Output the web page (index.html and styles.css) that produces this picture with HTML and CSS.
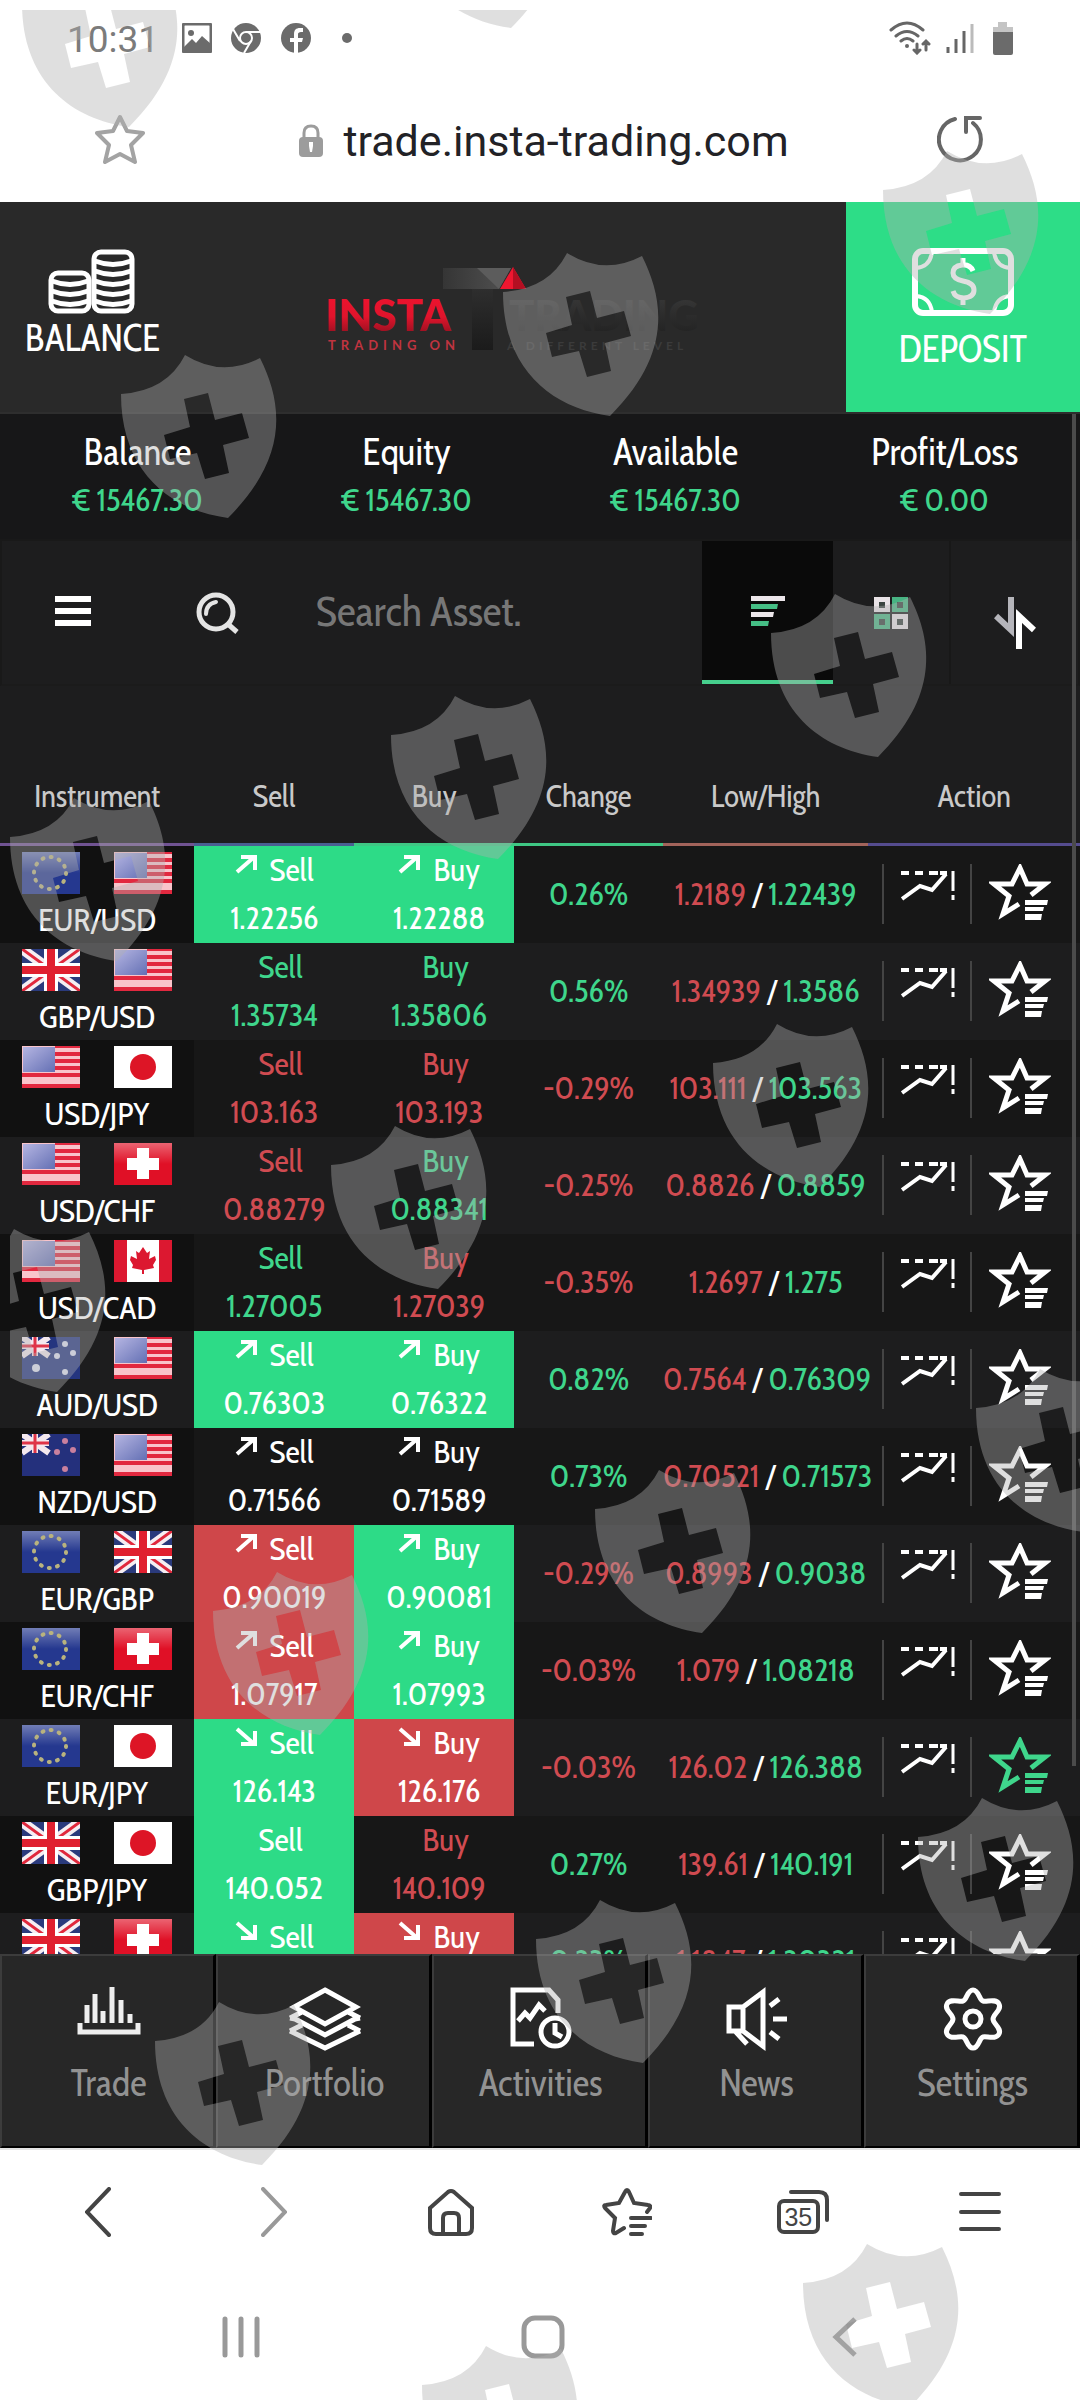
FILE: index.html
```html
<!DOCTYPE html>
<html lang="en">
<head>
<meta charset="utf-8">
<meta name="viewport" content="width=device-width, initial-scale=1">
<title>Insta Trading</title>
<link rel="stylesheet" href="styles.css">
</head>
<body>
<svg class="sprite" aria-hidden="true">
  <defs>
    <linearGradient id="sheen" x1="0" y1="0" x2="0" y2="1"><stop offset="0" stop-color="#fff" stop-opacity=".35"/><stop offset=".5" stop-color="#fff" stop-opacity="0"/></linearGradient>
    <linearGradient id="canton" x1="0" y1="0" x2="1" y2="1"><stop offset="0" stop-color="#b5b5e2"/><stop offset="1" stop-color="#6470b4"/></linearGradient>
    <linearGradient id="red" x1="0" y1="0" x2="0" y2="1"><stop offset="0" stop-color="#f3122f"/><stop offset=".55" stop-color="#e0142c"/><stop offset="1" stop-color="#7d0f1c"/></linearGradient>
    <linearGradient id="bar" x1="0" y1="0" x2="1" y2="0"><stop offset="0" stop-color="#353535"/><stop offset="1" stop-color="#525252"/></linearGradient>
    <linearGradient id="stem" x1="0" y1="0" x2="0" y2="1"><stop offset="0" stop-color="#2e2e2e"/><stop offset="1" stop-color="#1b1b1b"/></linearGradient>
    <linearGradient id="dark" x1="0" y1="0" x2="0" y2="1"><stop offset="0" stop-color="#3a3a3a"/><stop offset="1" stop-color="#1f1f1f"/></linearGradient>
  </defs>
  <symbol id="us" viewBox="0 0 58 42"><path fill="#f9c4cb" d="M0 0h58v42H0z"/><path fill="#e2283f" d="M33 0h25v2H33zM33 6h25v4H33zM33 13h25v4H33zM33 20h25v4H33zM0 27h58v4H0zM0 38h58v4H0z"/><path fill="url(#canton)" d="M1 1h32v25H1z"/></symbol>
  <symbol id="eu" viewBox="0 0 58 42"><path fill="#25388f" d="M0 0h58v42H0z"/><path fill="url(#sheen)" d="M0 0h58v42H0z"/><circle cx="28" cy="21" r="16" fill="none" stroke="#b9b37e" stroke-width="4" stroke-linecap="round" stroke-dasharray="1 7.4"/></symbol>
  <symbol id="gb" viewBox="0 0 58 42"><path fill="#2a3a7c" d="M0 0h58v42H0z"/><path stroke="#f5eef2" stroke-width="10" d="M0 0l58 42M58 0L0 42"/><path stroke="#e0283c" stroke-width="3" d="M0 0l58 42M58 0L0 42"/><path stroke="#fff" stroke-width="14" d="M29 0v42M0 21h58"/><path stroke="#e0202f" stroke-width="8" d="M29 0v42M0 21h58"/></symbol>
  <symbol id="jp" viewBox="0 0 58 42"><path fill="#fff" d="M0 0h58v42H0z"/><circle cx="29" cy="21" r="13" fill="#dd1526"/></symbol>
  <symbol id="ch" viewBox="0 0 58 42"><path fill="#e01026" d="M0 0h58v42H0z"/><path fill="url(#sheen)" d="M0 0h58v42H0z"/><path fill="#fff" d="M23 5h12v10h10v12H35v9H23v-9H13V15h10z"/></symbol>
  <symbol id="ca" viewBox="0 0 58 42"><path fill="#fff" d="M0 0h58v42H0z"/><path fill="#dc1830" d="M0 0h13v42H0zM45 0h13v42H45z"/><path fill="#dc1830" d="M29 7l4 6 3-2-1 8 6-3 1 4-3 5 1 3-10 2v4h-2v-4l-10-2 1-3-3-5 1-4 6 3-1-8 3 2z"/></symbol>
  <symbol id="au" viewBox="0 0 58 42"><path fill="#24357f" d="M0 0h58v42H0z"/><path stroke="#f4e8ee" stroke-width="6" d="M0 0l27 19M27 0L0 19M13 0v19M0 9h27"/><path stroke="#df3448" stroke-width="3" d="M13 0v19M0 9h27"/><g fill="#dfe3f4"><circle cx="14" cy="31" r="4"/><circle cx="43" cy="7" r="3"/><circle cx="35" cy="19" r="3"/><circle cx="51" cy="16" r="3"/><circle cx="43" cy="35" r="3"/></g></symbol>
  <symbol id="nz" viewBox="0 0 58 42"><path fill="#24307c" d="M0 0h58v42H0z"/><path stroke="#f4e8ee" stroke-width="6" d="M0 0l27 19M27 0L0 19M13 0v19M0 9h27"/><path stroke="#df3448" stroke-width="3" d="M13 0v19M0 9h27"/><g fill="#c9809e"><circle cx="43" cy="7" r="3"/><circle cx="35" cy="18" r="3"/><circle cx="51" cy="16" r="3"/><circle cx="43" cy="35" r="3"/></g></symbol>
  <symbol id="up" viewBox="0 0 22 20"><path fill="none" stroke="currentColor" stroke-width="4" d="M2 18L18 4M6 3h14v13"/></symbol>
  <symbol id="down" viewBox="0 0 22 20"><path fill="none" stroke="currentColor" stroke-width="4" d="M2 2l16 14M20 4v13H6"/></symbol>
  <symbol id="chart" viewBox="0 0 54 32"><path fill="none" stroke="currentColor" stroke-width="4" d="M0 3h8M14 3h8M28 3h9M39 3h7"/><path fill="none" stroke="currentColor" stroke-width="4" d="M1 29l18-13 12 4L45 4"/><path stroke="currentColor" stroke-width="3" d="M52 1v20M52 25v5"/></symbol>
  <symbol id="fav" viewBox="0 2 62 56"><path fill="none" stroke="currentColor" stroke-width="5" d="M42 33l14-11H38L31 6l-8 16H5l15 12-6 18 16-10"/><path fill="currentColor" d="M36 38h23l-1 5H36zM36 45h19l-1 4H36zM36 52h17l-1 6H36z"/></symbol>
</svg>

<div class="page">
  <div class="status">
    <span class="clock">10:31</span>
    <svg width="30" height="30" viewBox="0 0 30 30"><rect x="1" y="1" width="28" height="28" rx="2" fill="none" stroke="#6b6b6b" stroke-width="3"/><circle cx="9" cy="10" r="3" fill="#6b6b6b"/><path fill="#6b6b6b" d="M2 24l8-8 4 4 6-7 9 8v7H2z"/></svg>
    <svg width="32" height="32" viewBox="0 0 32 32"><circle cx="16" cy="16" r="15" fill="#6b6b6b"/><circle cx="16" cy="16" r="6" fill="#6b6b6b" stroke="#fff" stroke-width="2"/><path stroke="#fff" stroke-width="2" d="M16 10h14M10 19L3 7M21 19l-7 12"/></svg>
    <svg width="32" height="32" viewBox="0 0 32 32"><circle cx="16" cy="16" r="15" fill="#6b6b6b"/><path fill="#fff" d="M14 32V20h-4v-4h4v-4c0-4 2-6 6-6h3v4h-2c-2 0-3 1-3 2v4h5l-1 4h-4v12z"/></svg>
    <svg class="more" width="10" height="10" viewBox="0 0 10 10"><circle cx="5" cy="5" r="5" fill="#6b6b6b"/></svg>
    <span class="grow"></span>
    <svg width="42" height="34" viewBox="0 0 42 34"><g fill="none" stroke="#666" stroke-width="3" stroke-linecap="round"><path d="M2 9q16-14 32 0M7 15q11-9 22 0M12 20q6-5 12 0"/><path d="M28 23v8M25 29l3 3 3-3M37 29v-8M34 23l3-3 3 3"/></g><circle cx="18" cy="25" r="2" fill="#666"/></svg>
    <svg width="28" height="32" viewBox="0 0 28 32"><path stroke="#666" stroke-width="3" d="M2 25v6M10 17v14M18 9v22"/><path stroke="#bbb" stroke-width="3" d="M26 2v29"/></svg>
    <svg width="22" height="34" viewBox="0 0 22 34"><path fill="#c4c4c4" d="M6 1h9v5h6v6H1V6h5z"/><path fill="#6b6b6b" d="M1 11h20v21q0 2-2 2H3q-2 0-2-2z"/></svg>
  </div>

  <div class="address">
    <button class="plain" aria-label="Bookmark"><svg width="50" height="50" viewBox="0 0 50 50"><path fill="none" stroke="#a3a3a3" stroke-width="4" stroke-linejoin="round" d="M25 3l7 14 16 2-12 12 4 17-15-8-15 8 4-17L2 19l16-2z"/></svg></button>
    <a class="url" href="#"><svg width="24" height="34" viewBox="0 0 24 34"><path fill="none" stroke="#9c9c9c" stroke-width="3" d="M5 15V9q0-7 7-7t7 7v6"/><rect y="13" width="24" height="20" rx="4" fill="#9c9c9c"/><path fill="#fff" d="M10 18h4v4l-1 6h-2l-1-6z"/></svg><span>trade.insta-trading.com</span></a>
    <button class="plain" aria-label="Reload"><svg width="46" height="48" viewBox="0 0 46 48"><path fill="none" stroke="#666" stroke-width="4" stroke-linecap="round" d="M18 4a21 21 0 1 0 18 4M29 17V3h14"/></svg></button>
  </div>

  <main class="app">
    <header class="top">
      <button class="balance"><svg width="88" height="66" viewBox="0 0 88 66"><g fill="none" stroke="#fff" stroke-width="5"><rect x="3" y="25" width="38" height="38" rx="7"/><rect x="46" y="4" width="38" height="59" rx="7"/><path d="M4 33q18 7 36 0M4 43q18 7 36 0M4 53q18 7 36 0M47 13q18 7 36 0M47 23q18 7 36 0M47 33q18 7 36 0M47 43q18 7 36 0M47 53q18 7 36 0"/></g></svg><span>BALANCE</span></button>
      <a class="logo" href="#" aria-label="Insta Trading">
        <svg width="380" height="90" viewBox="0 0 380 90">
          <path fill="url(#stem)" d="M147 22h21v62h-21z"/><path fill="url(#bar)" d="M118 2h68l-12 21h-56z"/><path fill="#5c5c5c" d="M152 2h34l-12 21z"/><path fill="#ee1730" d="M188 1l13 22h-26z"/><path fill="#b30f22" d="M188 1l13 22h-13z"/>
          <g font-family="Lato, sans-serif"><text class="word big" x="0" y="65" fill="url(#red)">INSTA</text><text class="word" x="184" y="65" fill="url(#dark)">TRADING</text>
          <text class="tag" x="3" y="84" fill="#c03440">TRADING ON</text><text class="tag fine" x="182" y="84" fill="#3b3b3b">A DIFFERENT LEVEL</text></g>
        </svg>
      </a>
      <button class="deposit"><svg width="102" height="68" viewBox="0 0 102 68"><g fill="none" stroke="#fff" stroke-width="6"><rect x="3" y="3" width="96" height="62" rx="8"/><path stroke-width="4" d="M20 4q-2 15-16 16M82 4q2 15 16 16M4 48q14 1 16 16M98 48q-14 1-16 16"/><path stroke-width="5" d="M61 23q-3-7-11-6-9 1-9 8 0 6 10 8 11 2 11 9 0 7-10 8-9 0-11-7M51 10v8M51 49v8"/></g></svg><span>DEPOSIT</span></button>
    </header>

    <dl class="stats">
      <div><dt>Balance</dt><dd>€ 15467.30</dd></div>
      <div><dt>Equity</dt><dd>€ 15467.30</dd></div>
      <div><dt>Available</dt><dd>€ 15467.30</dd></div>
      <div><dt>Profit/Loss</dt><dd>€ 0.00</dd></div>
    </dl>

    <div class="tools">
      <button class="plain burger" aria-label="Menu"><svg width="38" height="32" viewBox="0 0 38 32"><path stroke="#fff" stroke-width="6" d="M1 4h36M1 16h36M1 28h36"/></svg></button>
      <label class="search"><svg width="44" height="42" viewBox="0 0 44 42"><g fill="none" stroke="#e4e4e4" stroke-width="5"><circle cx="21" cy="20" r="17"/><path d="M34 33l8 7"/><path stroke-width="4" d="M11 22q0-10 10-12" stroke-linecap="round"/></g></svg><input type="search" placeholder="Search Asset." aria-label="Search Asset"></label>
      <button class="tool active" aria-label="List view"><svg width="34" height="32" viewBox="0 0 34 32"><path fill="#ece6ea" d="M0 1h34v5H0zM0 17h23l-1 5H0z"/><path fill="#45be85" d="M0 9h27l-1 5H0zM0 26h18l-1 5H0z"/></svg></button>
      <button class="tool grid" aria-label="Grid view"><svg width="34" height="32" viewBox="0 0 34 32"><path fill="#e8e2e6" d="M0 0h16v15H0zM18 17h16v15H18z"/><path fill="#48b483" d="M18 0h16v15H18zM0 17h16v15H0z"/><path fill="#3a4440" d="M5 5h6v6H5zM23 5h6v6h-6zM5 22h6v6H5zM23 22h6v6h-6z"/></svg></button>
      <button class="tool sort" aria-label="Sort"><svg width="42" height="54" viewBox="0 0 42 54"><g fill="none" stroke-width="6"><path stroke="#b5b5bb" d="M17 1v33L2 20"/><path stroke="#fff" d="M25 53V20l15 14"/></g></svg></button>
    </div>

    <div class="list">
      <table>
        <colgroup><col class="c1"><col class="c2"><col class="c2"><col class="c3"><col class="c4"><col class="c5"></colgroup>
        <thead><tr><th class="violet">Instrument</th><th class="blue">Sell</th><th class="green">Buy</th><th class="green">Change</th><th class="rust">Low/High</th><th class="indigo">Action</th></tr></thead>
        <tbody>
          <tr><td class="pair"><div><svg><use href="#eu"/></svg><svg><use href="#us"/></svg></div>EUR/USD</td>
            <td><button class="quote fill-up"><span><svg><use href="#up"/></svg>Sell</span>1.22256</button></td><td><button class="quote fill-up buy"><span><svg><use href="#up"/></svg>Buy</span>1.22288</button></td>
            <td class="gain">0.26%</td><td><span class="loss">1.2189</span> / <span class="gain">1.22439</span></td>
            <td><div class="acts"><button aria-label="Chart EUR/USD"><svg class="ch"><use href="#chart"/></svg></button><button aria-label="Favourite EUR/USD"><svg class="fv"><use href="#fav"/></svg></button></div></td></tr>
          <tr><td class="pair"><div><svg><use href="#gb"/></svg><svg><use href="#us"/></svg></div>GBP/USD</td>
            <td><button class="quote gain"><span>Sell</span>1.35734</button></td><td><button class="quote gain buy"><span>Buy</span>1.35806</button></td>
            <td class="gain">0.56%</td><td><span class="loss">1.34939</span> / <span class="gain">1.3586</span></td>
            <td><div class="acts"><button aria-label="Chart GBP/USD"><svg class="ch"><use href="#chart"/></svg></button><button aria-label="Favourite GBP/USD"><svg class="fv"><use href="#fav"/></svg></button></div></td></tr>
          <tr><td class="pair"><div><svg><use href="#us"/></svg><svg><use href="#jp"/></svg></div>USD/JPY</td>
            <td><button class="quote loss"><span>Sell</span>103.163</button></td><td><button class="quote loss buy"><span>Buy</span>103.193</button></td>
            <td class="loss">-0.29%</td><td><span class="loss">103.111</span> / <span class="gain">103.563</span></td>
            <td><div class="acts"><button aria-label="Chart USD/JPY"><svg class="ch"><use href="#chart"/></svg></button><button aria-label="Favourite USD/JPY"><svg class="fv"><use href="#fav"/></svg></button></div></td></tr>
          <tr><td class="pair"><div><svg><use href="#us"/></svg><svg><use href="#ch"/></svg></div>USD/CHF</td>
            <td><button class="quote loss"><span>Sell</span>0.88279</button></td><td><button class="quote gain buy"><span>Buy</span>0.88341</button></td>
            <td class="loss">-0.25%</td><td><span class="loss">0.8826</span> / <span class="gain">0.8859</span></td>
            <td><div class="acts"><button aria-label="Chart USD/CHF"><svg class="ch"><use href="#chart"/></svg></button><button aria-label="Favourite USD/CHF"><svg class="fv"><use href="#fav"/></svg></button></div></td></tr>
          <tr><td class="pair"><div><svg><use href="#us"/></svg><svg><use href="#ca"/></svg></div>USD/CAD</td>
            <td><button class="quote gain"><span>Sell</span>1.27005</button></td><td><button class="quote loss buy"><span>Buy</span>1.27039</button></td>
            <td class="loss">-0.35%</td><td><span class="loss">1.2697</span> / <span class="gain">1.275</span></td>
            <td><div class="acts"><button aria-label="Chart USD/CAD"><svg class="ch"><use href="#chart"/></svg></button><button aria-label="Favourite USD/CAD"><svg class="fv"><use href="#fav"/></svg></button></div></td></tr>
          <tr><td class="pair"><div><svg><use href="#au"/></svg><svg><use href="#us"/></svg></div>AUD/USD</td>
            <td><button class="quote fill-up"><span><svg><use href="#up"/></svg>Sell</span>0.76303</button></td><td><button class="quote fill-up buy"><span><svg><use href="#up"/></svg>Buy</span>0.76322</button></td>
            <td class="gain">0.82%</td><td><span class="loss">0.7564</span> / <span class="gain">0.76309</span></td>
            <td><div class="acts"><button aria-label="Chart AUD/USD"><svg class="ch"><use href="#chart"/></svg></button><button aria-label="Favourite AUD/USD"><svg class="fv"><use href="#fav"/></svg></button></div></td></tr>
          <tr><td class="pair"><div><svg><use href="#nz"/></svg><svg><use href="#us"/></svg></div>NZD/USD</td>
            <td><button class="quote"><span><svg><use href="#up"/></svg>Sell</span>0.71566</button></td><td><button class="quote buy"><span><svg><use href="#up"/></svg>Buy</span>0.71589</button></td>
            <td class="gain">0.73%</td><td><span class="loss">0.70521</span> / <span class="gain">0.71573</span></td>
            <td><div class="acts"><button aria-label="Chart NZD/USD"><svg class="ch"><use href="#chart"/></svg></button><button aria-label="Favourite NZD/USD"><svg class="fv"><use href="#fav"/></svg></button></div></td></tr>
          <tr><td class="pair"><div><svg><use href="#eu"/></svg><svg><use href="#gb"/></svg></div>EUR/GBP</td>
            <td><button class="quote fill-down"><span><svg><use href="#up"/></svg>Sell</span>0.90019</button></td><td><button class="quote fill-up buy"><span><svg><use href="#up"/></svg>Buy</span>0.90081</button></td>
            <td class="loss">-0.29%</td><td><span class="loss">0.8993</span> / <span class="gain">0.9038</span></td>
            <td><div class="acts"><button aria-label="Chart EUR/GBP"><svg class="ch"><use href="#chart"/></svg></button><button aria-label="Favourite EUR/GBP"><svg class="fv"><use href="#fav"/></svg></button></div></td></tr>
          <tr><td class="pair"><div><svg><use href="#eu"/></svg><svg><use href="#ch"/></svg></div>EUR/CHF</td>
            <td><button class="quote fill-down"><span><svg><use href="#up"/></svg>Sell</span>1.07917</button></td><td><button class="quote fill-up buy"><span><svg><use href="#up"/></svg>Buy</span>1.07993</button></td>
            <td class="loss">-0.03%</td><td><span class="loss">1.079</span> / <span class="gain">1.08218</span></td>
            <td><div class="acts"><button aria-label="Chart EUR/CHF"><svg class="ch"><use href="#chart"/></svg></button><button aria-label="Favourite EUR/CHF"><svg class="fv"><use href="#fav"/></svg></button></div></td></tr>
          <tr><td class="pair"><div><svg><use href="#eu"/></svg><svg><use href="#jp"/></svg></div>EUR/JPY</td>
            <td><button class="quote fill-up"><span><svg><use href="#down"/></svg>Sell</span>126.143</button></td><td><button class="quote fill-down buy"><span><svg><use href="#down"/></svg>Buy</span>126.176</button></td>
            <td class="loss">-0.03%</td><td><span class="loss">126.02</span> / <span class="gain">126.388</span></td>
            <td><div class="acts"><button aria-label="Chart EUR/JPY"><svg class="ch"><use href="#chart"/></svg></button><button class="gain" aria-label="Favourite EUR/JPY"><svg class="fv"><use href="#fav"/></svg></button></div></td></tr>
          <tr><td class="pair"><div><svg><use href="#gb"/></svg><svg><use href="#jp"/></svg></div>GBP/JPY</td>
            <td><button class="quote fill-up"><span>Sell</span>140.052</button></td><td><button class="quote loss buy"><span>Buy</span>140.109</button></td>
            <td class="gain">0.27%</td><td><span class="loss">139.61</span> / <span class="gain">140.191</span></td>
            <td><div class="acts"><button aria-label="Chart GBP/JPY"><svg class="ch"><use href="#chart"/></svg></button><button aria-label="Favourite GBP/JPY"><svg class="fv"><use href="#fav"/></svg></button></div></td></tr>
          <tr><td class="pair"><div><svg><use href="#gb"/></svg><svg><use href="#ch"/></svg></div></td>
            <td><button class="quote fill-up"><span><svg><use href="#down"/></svg>Sell</span></button></td><td><button class="quote fill-down buy"><span><svg><use href="#down"/></svg>Buy</span></button></td>
            <td class="gain">0.23%</td><td><span class="loss">1.1847</span> / <span class="gain">1.20321</span></td>
            <td><div class="acts"><button aria-label="Chart GBP/CHF"><svg class="ch"><use href="#chart"/></svg></button><button aria-label="Favourite GBP/CHF"><svg class="fv"><use href="#fav"/></svg></button></div></td></tr>
        </tbody>
      </table>
    </div>

    <nav class="tabs">
      <a href="#"><svg width="64" height="64" viewBox="0 0 64 64"><path fill="none" stroke="#eee" stroke-width="5" d="M3 36v9h58v-9M10 36V18M18 36V7M26 36V24M35 36V0M44 36V13M53 36V27"/></svg>Trade</a>
      <a href="#"><svg width="72" height="64" viewBox="0 0 72 64"><path fill="none" stroke="#fff" stroke-width="5" d="M36 3l31 17-31 17L5 20zM1 31l5 1 30 16 30-16 5-1M1 44l35 17 35-17M1 31l12-6M71 31l-12-6M1 44l12-6M71 44l-12-6"/></svg>Portfolio</a>
      <a href="#"><svg width="62" height="64" viewBox="0 0 62 64"><g fill="none" stroke="#fff" stroke-width="5"><path d="M24 57H3V3h36l9 10v13M8 34l7-8 5 5 9-13 6 6"/><circle cx="45" cy="45" r="14"/><path d="M45 36v10l7 4"/></g></svg>Activities</a>
      <a href="#"><svg width="62" height="64" viewBox="0 0 62 64"><path fill="none" stroke="#fff" stroke-width="5" d="M3 20h14v24H3zM17 20L37 5v54L17 44M9 44l12 13M44 19l9-7M47 32h14M44 45l9 7"/></svg>News</a>
      <a href="#"><svg width="62" height="64" viewBox="0 0 62 64"><path fill="none" stroke="#fff" stroke-width="5" stroke-linejoin="round" d="M31 3c6 0 6 10 10 11s13-3 16 3-6 10-6 15 9 9 6 15-12 2-16 3-4 11-10 11-6-10-10-11-13 3-16-3 6-10 6-15-9-9-6-15 12-2 16-3 4-11 10-11z"/><circle cx="31" cy="32" r="8" fill="none" stroke="#fff" stroke-width="5"/></svg>Settings</a>
    </nav>
    <span class="scrollbar"></span>
  </main>

  <nav class="browser">
    <button class="plain" aria-label="Back"><svg width="26" height="50" viewBox="0 0 26 50"><path d="M24 2L2 25l22 23"/></svg></button>
    <button class="plain dim" aria-label="Forward"><svg width="26" height="50" viewBox="0 0 26 50"><path d="M2 2l22 23L2 48"/></svg></button>
    <button class="plain" aria-label="Home"><svg width="46" height="48" viewBox="0 0 46 48"><path d="M2 20L20 4q3-2 6 0l18 16v20q0 6-6 6H8q-6 0-6-6zM15 46V30q0-5 5-5h6q5 0 5 5v16"/></svg></button>
    <button class="plain" aria-label="Bookmarks"><svg width="50" height="50" viewBox="0 0 50 50"><path d="M45 25l3-4q1-3-2-3l-14-2-5-11q-2-4-4 0l-6 11-13 2q-3 0-1 3l10 10-2 13q0 3 3 2l8-5M29 31h20M29 39h14M29 47h11"/></svg></button>
    <button class="plain count" aria-label="35 open tabs"><svg width="52" height="48" viewBox="0 0 52 48"><rect x="2" y="13" width="39" height="31" rx="5"/><path d="M14 4h28q8 0 8 8v20"/></svg><span>35</span></button>
    <button class="plain" aria-label="Browser menu"><svg width="42" height="42" viewBox="0 0 42 42"><path d="M2 3h38M2 21h38M2 38h38"/></svg></button>
  </nav>

  <nav class="system">
    <button class="plain" aria-label="Recent apps"><svg width="38" height="42" viewBox="0 0 38 42"><path stroke-linecap="round" d="M3 3v36M19 3v36M35 3v36"/></svg></button>
    <button class="plain" aria-label="Home screen"><svg width="44" height="44" viewBox="0 0 44 44"><rect x="3" y="3" width="38" height="38" rx="11"/></svg></button>
    <button class="plain" aria-label="Go back"><svg width="26" height="42" viewBox="0 0 26 42"><path d="M23 3L4 21l19 18"/></svg></button>
  </nav>

  <svg class="shields" aria-hidden="true">
    <defs><path id="mark" fill-rule="evenodd" d="M-64 39Q-18 36 0 0Q37 23 75 3C98 49 104 102 43 163C-15 155-64 117-64 39ZM-1 44L23 38 30 65 57 58 64 83 38 90 44 118 20 124 12 98-15 104-21 80 5 72Z"/></defs>
    <g fill="#afafaf" fill-opacity=".4">
      <use href="#mark" x="76" y="-46"/><use href="#mark" x="458" y="-145"/><use href="#mark" x="175" y="345"/><use href="#mark" x="557" y="243"/><use href="#mark" x="937" y="141"/>
      <use href="#mark" x="64" y="788"/><use href="#mark" x="445" y="686"/><use href="#mark" x="825" y="584"/><use href="#mark" x="4" y="1219"/><use href="#mark" x="385" y="1116"/><use href="#mark" x="767" y="1014"/>
      <use href="#mark" x="267" y="1562"/><use href="#mark" x="649" y="1460"/><use href="#mark" x="1030" y="1359"/><use href="#mark" x="209" y="1992"/><use href="#mark" x="590" y="1890"/><use href="#mark" x="972" y="1788"/>
      <use href="#mark" x="476" y="2336"/><use href="#mark" x="857" y="2234"/>
    </g>
  </svg>
</div>
</body>
</html>
```
FILE: styles.css
```css
* { box-sizing: border-box; }
body { margin: 0; background: #fff; }
button, a { font: inherit; color: inherit; text-decoration: none; }
button { margin: 0; padding: 0; border: 0; background: none; }
svg { display: block; flex: none; }
.sprite { position: absolute; width: 0; height: 0; }

.page {
  position: relative;
  display: flex;
  flex-direction: column;
  height: 100vh;
  overflow: hidden;
  font-family: "Cabin Condensed", "Liberation Sans Narrow", "Roboto Condensed", "Liberation Sans", sans-serif;
  font-size: 32px;
  line-height: 36px;
  color: #fff;
}
.grow { flex: 1; }

/* phone status bar and address bar */
.status { display: flex; align-items: center; gap: 18px; height: 76px; padding: 0 66px 0 67px; color: #7b7b7b; font-family: Roboto, sans-serif; }
.clock { font-size: 37px; width: 97px; padding-top: 3px; }
.status .more { margin-left: 12px; }
.status svg:nth-last-child(2) { margin-left: -3px; }
.address { display: flex; align-items: center; justify-content: space-between; height: 126px; padding: 2px 97px 0 95px; color: #222226; font-family: Roboto, sans-serif; font-size: 43px; line-height: 50px; }
.address .plain { padding-bottom: 2px; }
.url { display: flex; align-items: center; gap: 20px; padding: 2px 0 0 6px; }

.app { position: relative; display: flex; flex-direction: column; flex: 1; min-height: 0; background: #1d1d1e; }

/* account header */
.top { display: flex; justify-content: space-between; height: 212px; background: #292929; border-bottom: 2px solid #2e2e2e; font-size: 37px; line-height: 40px; }
.balance, .deposit { display: flex; flex-direction: column; align-items: center; }
.balance { padding: 46px 25px 0; gap: 4px; }
.deposit { width: 234px; padding-top: 46px; gap: 13px; background: #2ddd87; }
.logo { padding-top: 64px; }
.word { font-size: 42px; font-weight: 900; }
.big { font-size: 44px; }
.tag { font-size: 13px; font-weight: 700; letter-spacing: 5px; }
.fine { font-size: 12px; letter-spacing: 4px; }

.stats { display: grid; grid-template-columns: repeat(4, 1fr); height: 125px; margin: 0; padding: 16px 1px 0 3px; background: #171718; text-align: center; }
.stats dt { font-size: 37px; line-height: 44px; }
.stats dd { margin: 0; padding-top: 6px; color: #3fd68c; line-height: 40px; }

/* toolbar */
.tools { display: flex; align-items: stretch; height: 147px; border: 2px solid #191919; border-bottom-color: #1b1b1b; background: #1d1d1e; }
.burger { flex: none; width: 142px; display: flex; align-items: center; justify-content: center; padding-bottom: 4px; }
.search { display: flex; align-items: center; gap: 77px; flex: 1; min-width: 0; padding-left: 51px; }
.search input { flex: 1; min-width: 0; border: 0; padding: 0 0 4px; background: none; color: #fff; font: inherit; font-size: 42px; line-height: 48px; }
.search input::placeholder { color: #777; opacity: 1; }
.tool { flex: none; display: flex; align-items: center; justify-content: center; }
.active { width: 131px; background: #0a0a0a; border-bottom: 4px solid #46cf8d; }
.grid { width: 116px; }
.sort { width: 129px; padding-top: 20px; border-left: 2px solid #181818; }

/* instruments */
.list { flex: 1; min-height: 0; overflow: hidden; }
table { width: 100%; border-collapse: collapse; table-layout: fixed; text-align: center; white-space: nowrap; }
.c1 { width: 18%; }
.c2 { width: 14.8%; }
.c3 { width: 13.8%; }
.c4 { width: 19%; }
.c5 { width: 19.6%; }
th { height: 158px; padding: 64px 0 0; border-bottom: 3px solid; color: #c9c9c9; font-size: 31px; font-weight: 400; vertical-align: middle; }
.violet { border-color: #705392; }
.blue { border-color: #4a5f92; }
.green { border-color: #3fc784; }
.rust { border-color: #a3645b; }
.indigo { border-color: #554c8f; }
td { height: 97px; padding: 0; vertical-align: middle; }
tbody tr:nth-child(odd) { background: #171717; }
tbody tr:nth-child(odd) .pair { background: #111; }
.pair { padding: 6px 0 0; vertical-align: top; }
.pair div { display: flex; justify-content: center; gap: 34px; height: 42px; margin-bottom: 8px; }
.pair svg { width: 58px; height: 42px; }
.quote { display: flex; flex-direction: column; align-items: center; width: 100%; height: 97px; padding-top: 6px; line-height: 46px; }
.quote span { display: flex; align-items: flex-start; gap: 13px; height: 43px; line-height: 36px; }
.quote span::before { content: ""; }
.quote span:has(svg)::before { content: none; }
.quote svg { width: 22px; height: 20px; margin-top: 2px; }
.quote.buy { padding-left: 10px; }
.gain { color: #3fd68c; }
.loss { color: #d04b51; }
.fill-up { background: #2ddb87; color: #fff; }
.fill-down { background: #cf474a; color: #fff; }
.acts { display: grid; grid-template-columns: 88px 1fr; height: 60px; margin: 0 0 0 14px; }
.acts button { display: flex; align-items: flex-start; padding-left: 17px; border-left: 2px solid #444; }
.ch { width: 54px; height: 32px; margin-top: 6px; }
.fv { width: 62px; height: 56px; }

/* app tabs */
.tabs { display: grid; grid-template-columns: repeat(5, 1fr); height: 194px; background: #272727; color: #929292; font-size: 37px; line-height: 44px; }
.tabs a { display: flex; flex-direction: column; align-items: center; gap: 10px; padding: 31px 0 0 2px; border: 2px solid #3c3c3c; border-right: 3px solid #000; border-bottom-color: #000; }
.scrollbar { position: absolute; top: 212px; right: 4px; width: 4px; height: 1352px; background: #4b4b4b; }

/* browser and system bars */
.browser { display: flex; justify-content: space-around; align-items: center; height: 130px; padding: 0 12px 5px 10px; border-top: 2px solid #e4e4e4; }
.browser svg { fill: none; stroke: #444; stroke-width: 4; stroke-linecap: round; }
.browser button { width: 52px; display: flex; justify-content: center; }
.browser .dim svg { stroke: #999; }
.count { position: relative; color: #444; font: 25px/30px "Liberation Sans", sans-serif; }
.count span { position: absolute; left: 7px; top: 14px; }
.system { display: grid; grid-template-columns: repeat(3, 1fr); justify-items: center; align-items: center; height: 122px; padding: 0 84px 4px 90px; }
.system svg { fill: none; stroke: #999; stroke-width: 5; }

.shields { position: absolute; left: 10px; top: 10px; width: calc(100% - 10px); height: calc(100% - 10px); overflow: hidden; pointer-events: none; }
```
